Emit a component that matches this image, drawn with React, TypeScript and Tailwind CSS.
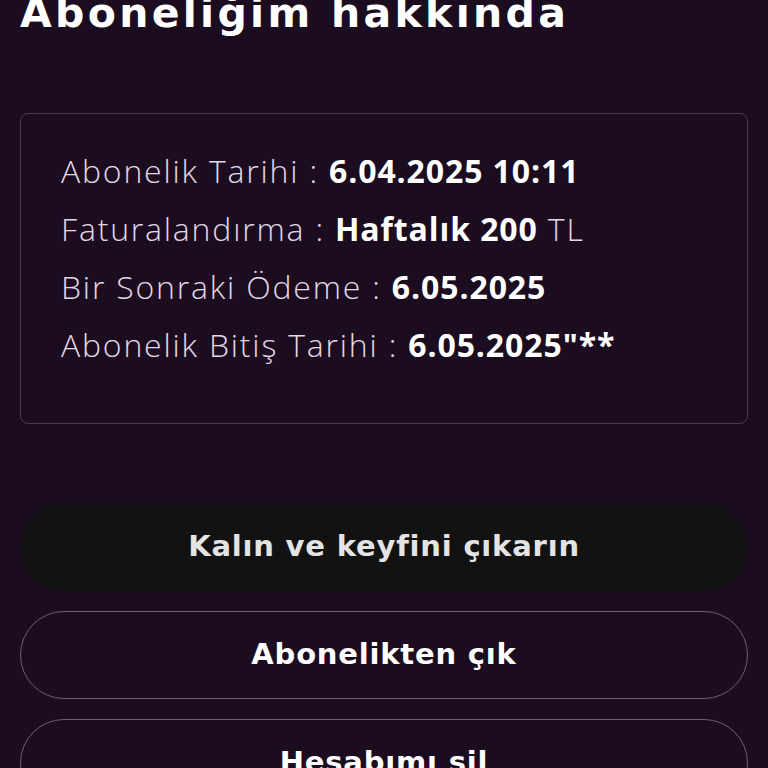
const ROWS = [
  { label: 'Abonelik Tarihi', value: '6.04.2025 10:11', suffix: '' },
  { label: 'Faturalandırma', value: 'Haftalık 200', suffix: ' TL' },
  { label: 'Bir Sonraki Ödeme', value: '6.05.2025', suffix: '' },
  { label: 'Abonelik Bitiş Tarihi', value: '6.05.2025"**', suffix: '' },
]

export default function App() {
  return (
    <div className="min-h-screen w-full overflow-hidden bg-[#1c0c1f] px-5 text-white">
      <h1
        className="-mt-[12px] h-[50px] text-[41px] leading-[50px] font-bold tracking-[3.3px]"
        style={{ fontFamily: '"DejaVu Sans", sans-serif' }}
      >
        Aboneliğim hakkında
      </h1>

      <div
        className="mt-[75px] flex h-[311px] flex-col gap-[22px] rounded-lg border border-[#4a3b4e] px-10 pt-[39px]"
        style={{ fontFamily: '"Open Sans", sans-serif' }}
      >
        {ROWS.map((r) => (
          <p key={r.label} className="text-[32px] leading-[36px] font-light tracking-[1.8px] text-[#e3d8e6]">
            {r.label} : <span className="font-bold tracking-[0.9px] text-white">{r.value}</span>
            {r.suffix}
          </p>
        ))}
      </div>

      <div className="mt-[79px] flex flex-col gap-5" style={{ fontFamily: '"DejaVu Sans", sans-serif' }}>
        <button className="h-[88px] w-full rounded-full bg-[#121212] text-[29px] font-bold tracking-[0.8px] text-[#e4e4e4]">
          Kalın ve keyfini çıkarın
        </button>
        <button className="h-[88px] w-full rounded-full border border-[#6e5e71] text-[29px] font-bold tracking-[0.8px] text-white">
          Abonelikten çık
        </button>
        <button className="h-[88px] w-full rounded-full border border-[#6e5e71] text-[29px] font-bold tracking-[0.8px] text-white">
          Hesabımı sil
        </button>
      </div>
    </div>
  )
}
